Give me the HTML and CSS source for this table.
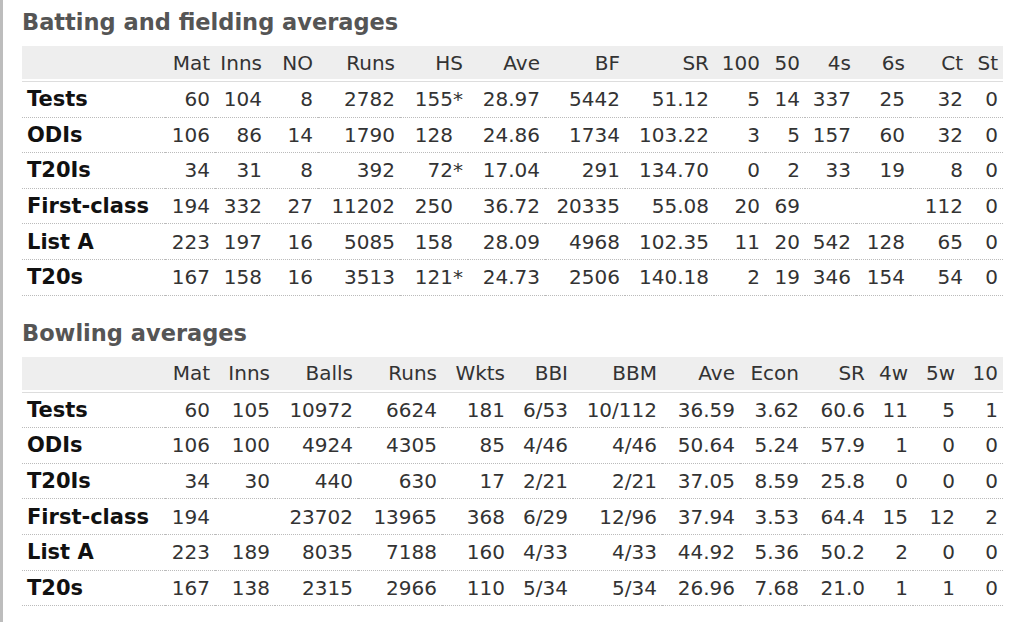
FILE: index.html
```html
<!DOCTYPE html>
<html lang="en">
<head>
<meta charset="utf-8">
<title>Career averages</title>
<link rel="stylesheet" href="styles.css">
</head>
<body>
<div class="page">
  <h2 class="section-title">Batting and fielding averages</h2>
  <table class="stats batting">
    <colgroup>
      <col class="c-label"><col class="b1"><col class="b2"><col class="b3"><col class="b4"><col class="b5"><col class="b6"><col class="b7"><col class="b8"><col class="b9"><col class="b10"><col class="b11"><col class="b12"><col class="b13"><col class="b14">
    </colgroup>
    <thead>
      <tr><th class="lbl"></th><th>Mat</th><th>Inns</th><th>NO</th><th>Runs</th><th>HS</th><th>Ave</th><th>BF</th><th>SR</th><th>100</th><th>50</th><th>4s</th><th>6s</th><th>Ct</th><th>St</th></tr>
    </thead>
    <tbody>
      <tr><td class="lbl">Tests</td><td>60</td><td>104</td><td>8</td><td>2782</td><td>155*</td><td>28.97</td><td>5442</td><td>51.12</td><td>5</td><td>14</td><td>337</td><td>25</td><td>32</td><td>0</td></tr>
      <tr><td class="lbl">ODIs</td><td>106</td><td>86</td><td>14</td><td>1790</td><td>128<span class="pad">*</span></td><td>24.86</td><td>1734</td><td>103.22</td><td>3</td><td>5</td><td>157</td><td>60</td><td>32</td><td>0</td></tr>
      <tr><td class="lbl">T20Is</td><td>34</td><td>31</td><td>8</td><td>392</td><td>72*</td><td>17.04</td><td>291</td><td>134.70</td><td>0</td><td>2</td><td>33</td><td>19</td><td>8</td><td>0</td></tr>
      <tr><td class="lbl">First-class</td><td>194</td><td>332</td><td>27</td><td>11202</td><td>250<span class="pad">*</span></td><td>36.72</td><td>20335</td><td>55.08</td><td>20</td><td>69</td><td></td><td></td><td>112</td><td>0</td></tr>
      <tr><td class="lbl">List A</td><td>223</td><td>197</td><td>16</td><td>5085</td><td>158<span class="pad">*</span></td><td>28.09</td><td>4968</td><td>102.35</td><td>11</td><td>20</td><td>542</td><td>128</td><td>65</td><td>0</td></tr>
      <tr><td class="lbl">T20s</td><td>167</td><td>158</td><td>16</td><td>3513</td><td>121*</td><td>24.73</td><td>2506</td><td>140.18</td><td>2</td><td>19</td><td>346</td><td>154</td><td>54</td><td>0</td></tr>
    </tbody>
  </table>

  <h2 class="section-title second">Bowling averages</h2>
  <table class="stats bowling">
    <colgroup>
      <col class="c-label"><col class="w1"><col class="w2"><col class="w3"><col class="w4"><col class="w5"><col class="w6"><col class="w7"><col class="w8"><col class="w9"><col class="w10"><col class="w11"><col class="w12"><col class="w13">
    </colgroup>
    <thead>
      <tr><th class="lbl"></th><th>Mat</th><th>Inns</th><th>Balls</th><th>Runs</th><th>Wkts</th><th>BBI</th><th>BBM</th><th>Ave</th><th>Econ</th><th>SR</th><th>4w</th><th>5w</th><th>10</th></tr>
    </thead>
    <tbody>
      <tr><td class="lbl">Tests</td><td>60</td><td>105</td><td>10972</td><td>6624</td><td>181</td><td>6/53</td><td>10/112</td><td>36.59</td><td>3.62</td><td>60.6</td><td>11</td><td>5</td><td>1</td></tr>
      <tr><td class="lbl">ODIs</td><td>106</td><td>100</td><td>4924</td><td>4305</td><td>85</td><td>4/46</td><td>4/46</td><td>50.64</td><td>5.24</td><td>57.9</td><td>1</td><td>0</td><td>0</td></tr>
      <tr><td class="lbl">T20Is</td><td>34</td><td>30</td><td>440</td><td>630</td><td>17</td><td>2/21</td><td>2/21</td><td>37.05</td><td>8.59</td><td>25.8</td><td>0</td><td>0</td><td>0</td></tr>
      <tr><td class="lbl">First-class</td><td>194</td><td></td><td>23702</td><td>13965</td><td>368</td><td>6/29</td><td>12/96</td><td>37.94</td><td>3.53</td><td>64.4</td><td>15</td><td>12</td><td>2</td></tr>
      <tr><td class="lbl">List A</td><td>223</td><td>189</td><td>8035</td><td>7188</td><td>160</td><td>4/33</td><td>4/33</td><td>44.92</td><td>5.36</td><td>50.2</td><td>2</td><td>0</td><td>0</td></tr>
      <tr><td class="lbl">T20s</td><td>167</td><td>138</td><td>2315</td><td>2966</td><td>110</td><td>5/34</td><td>5/34</td><td>26.96</td><td>7.68</td><td>21.0</td><td>1</td><td>1</td><td>0</td></tr>
    </tbody>
  </table>
</div>
</body>
</html>
```

FILE: styles.css
```css
html, body {
  margin: 0;
  padding: 0;
  background: #ffffff;
}

.page {
  min-height: 622px;
  box-sizing: border-box;
  border-left: 3px solid #bdbdbd;
  padding-left: 19px;
  padding-top: 8px;
  font-family: "DejaVu Sans", Verdana, sans-serif;
  color: #333333;
}

.section-title {
  margin: 0 0 10px 0;
  font-size: 22.5px;
  line-height: 28px;
  font-weight: bold;
  color: #555555;
}

.section-title.second {
  margin-top: 23px;
}

.stats {
  border-collapse: collapse;
  table-layout: fixed;
  width: 981px;
  font-size: 20px;
}

.stats th,
.stats td {
  padding: 0 5px 0 0;
  text-align: right;
  white-space: nowrap;
  overflow: visible;
}

.stats th {
  height: 33px;
  font-weight: normal;
  color: #333333;
  background: #eeeeee;
  box-shadow: inset 0 -2px 0 #ffffff;
  border-bottom: 1px solid #dddddd;
  padding-bottom: 2px;
}

.stats td {
  height: 34.6px;
  border-bottom: 1px dotted #bbbbbb;
  color: #333333;
}

.stats td.lbl,
.stats th.lbl {
  text-align: left;
  padding-left: 5px;
}

.stats td.lbl {
  font-weight: bold;
  font-size: 21px;
  color: #111111;
}

.pad {
  visibility: hidden;
}

.c-label { width: 143px; }

/* batting columns */
.b1 { width: 50px; }
.b2 { width: 52px; }
.b3 { width: 51px; }
.b4 { width: 82px; }
.b5 { width: 68px; }
.b6 { width: 77px; }
.b7 { width: 80px; }
.b8 { width: 89px; }
.b9 { width: 51px; }
.b10 { width: 40px; }
.b11 { width: 51px; }
.b12 { width: 54px; }
.b13 { width: 58px; }
.b14 { width: 35px; }

/* bowling columns */
.w1 { width: 50px; }
.w2 { width: 60px; }
.w3 { width: 83px; }
.w4 { width: 84px; }
.w5 { width: 68px; }
.w6 { width: 63px; }
.w7 { width: 89px; }
.w8 { width: 78px; }
.w9 { width: 64px; }
.w10 { width: 66px; }
.w11 { width: 43px; }
.w12 { width: 47px; }
.w13 { width: 43px; }
```
